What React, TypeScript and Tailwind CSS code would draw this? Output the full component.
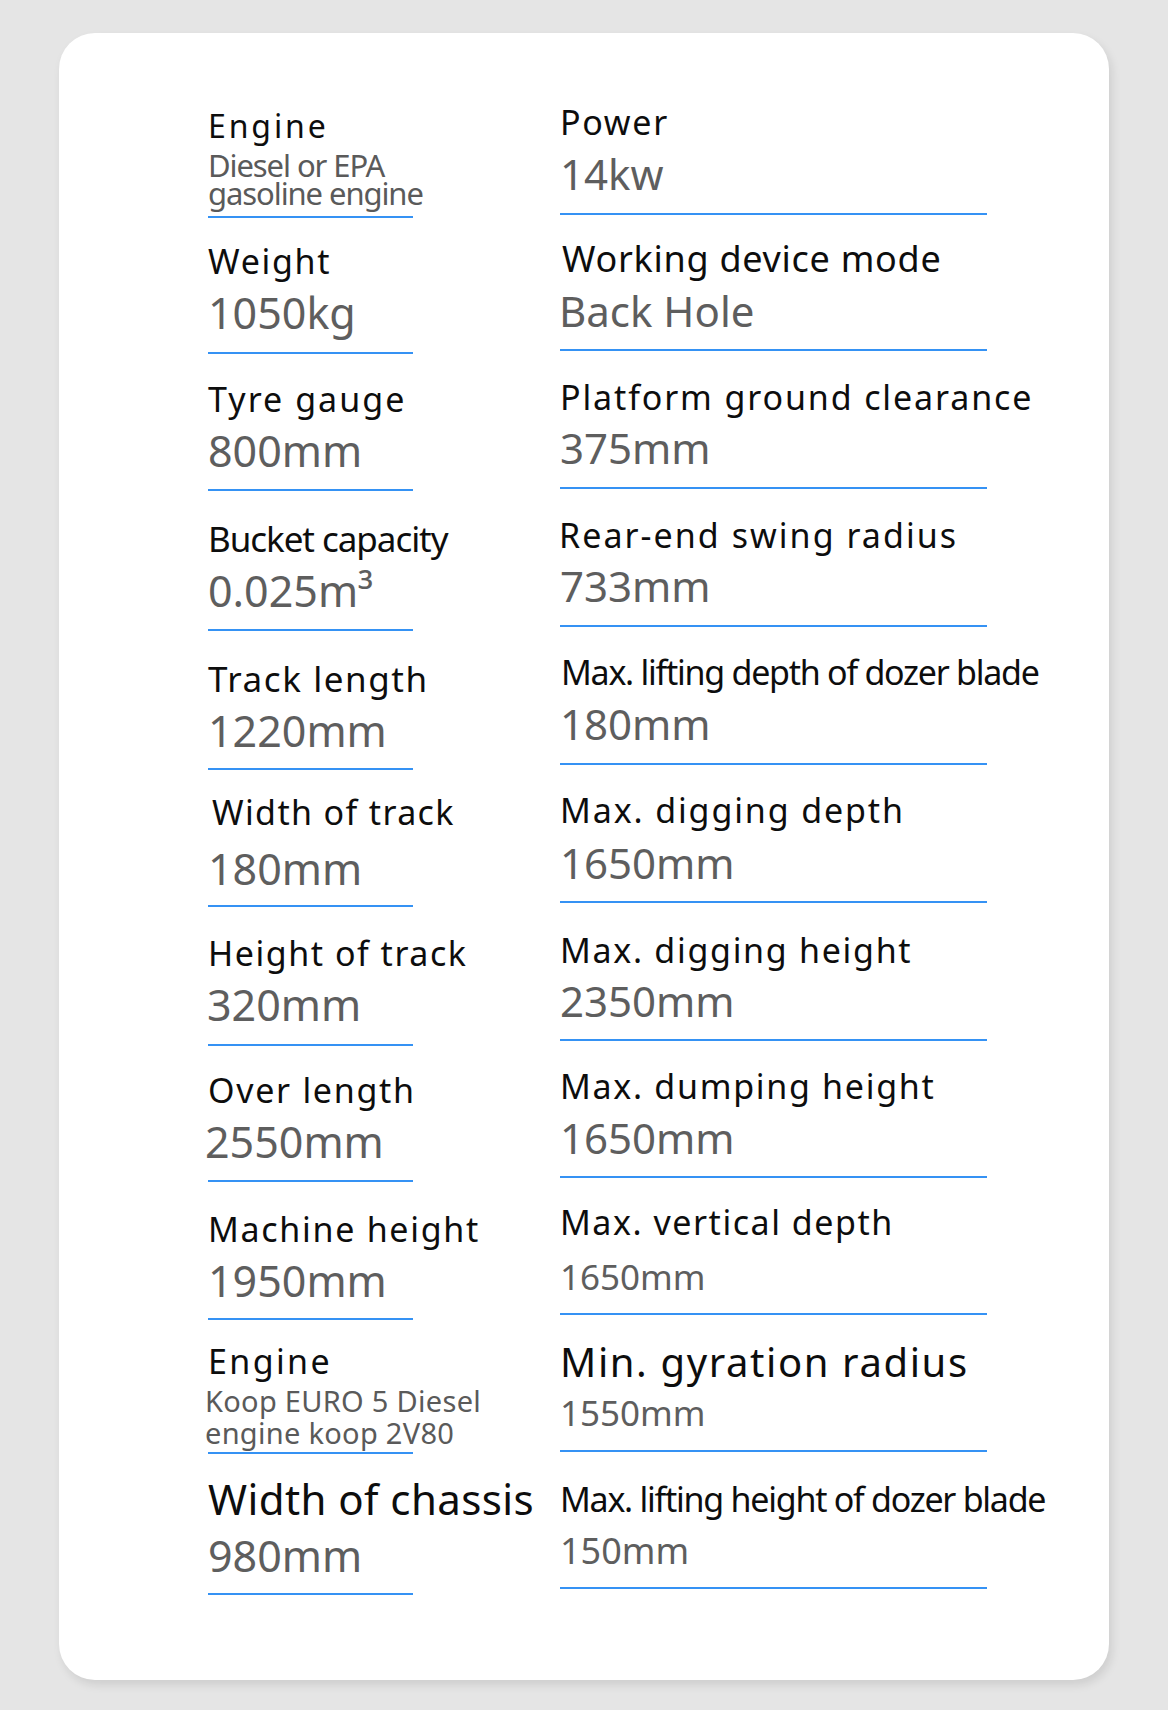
type Spec = {
  h: string
  label: string
  lc: string
  value?: string
  vc?: string
  sub?: string[]
  sc?: string
}

// left column: cell heights run from one blue rule to the next
const left: Spec[] = [
  { h: 'h-[185px]', label: 'Engine', lc: 'mt-[77px] text-[32px] tracking-[0.09em]',
    sub: ['Diesel or EPA', 'gasoline engine'], sc: 'mt-[9px] text-[31px] leading-[28px] tracking-[-0.035em]' },
  { h: 'h-[136px]', label: 'Weight', lc: 'mt-[26px] text-[34px] tracking-[0.05em]', value: '1050kg', vc: 'mt-[13px] text-[43px]' },
  { h: 'h-[137px]', label: 'Tyre gauge', lc: 'mt-[28px] text-[34px] tracking-[0.06em]', value: '800mm', vc: 'mt-[13px] text-[43px]' },
  { h: 'h-[140px]', label: 'Bucket capacity', lc: 'mt-[30px] text-[35px] tracking-[-0.03em]', value: '0.025m³', vc: 'mt-[13px] text-[43px]' },
  { h: 'h-[139px]', label: 'Track length', lc: 'mt-[30px] text-[35px] tracking-[0.045em]', value: '1220mm', vc: 'mt-[13px] text-[43px]' },
  { h: 'h-[137px]', label: 'Width of track', lc: 'mt-[25px] ml-[4px] text-[34px] tracking-[0.04em]', value: '180mm', vc: 'mt-[18px] text-[43px]' },
  { h: 'h-[139px]', label: 'Height of track', lc: 'mt-[29px] text-[34px] tracking-[0.045em]', value: '320mm', vc: 'mt-[13px] -ml-[1px] text-[43px]' },
  { h: 'h-[136px]', label: 'Over length', lc: 'mt-[27px] text-[34px] tracking-[0.05em]', value: '2550mm', vc: 'mt-[13px] -ml-[3px] text-[43px]' },
  { h: 'h-[138px]', label: 'Machine height', lc: 'mt-[30px] text-[34px] tracking-[0.05em]', value: '1950mm', vc: 'mt-[13px] text-[43px]' },
  { h: 'h-[134px]', label: 'Engine', lc: 'mt-[24px] text-[34px] tracking-[0.07em]',
    sub: ['Koop EURO 5 Diesel', 'engine koop 2V80'], sc: 'mt-[7px] -ml-[3px] text-[29px] leading-[32px] tracking-[0.01em]' },
  { h: 'h-[141px]', label: 'Width of chassis', lc: 'mt-[24px] text-[42px] tracking-[0.01em]', value: '980mm', vc: 'mt-[14px] text-[43px]' },
]

const right: Spec[] = [
  { h: 'h-[182px]', label: 'Power', lc: 'mt-[72px] text-[34px] tracking-[0.05em]', value: '14kw', vc: 'mt-[14px] text-[42px]' },
  { h: 'h-[136px]', label: 'Working device mode', lc: 'mt-[26px] ml-[2px] text-[36px] tracking-[0.02em]', value: 'Back Hole', vc: 'mt-[13px] -ml-[1px] text-[42px]' },
  { h: 'h-[138px]', label: 'Platform ground clearance', lc: 'mt-[29px] text-[34px] tracking-[0.055em]', value: '375mm', vc: 'mt-[13px] text-[42px]' },
  { h: 'h-[138px]', label: 'Rear-end swing radius', lc: 'mt-[29px] -ml-[1px] text-[34px] tracking-[0.06em]', value: '733mm', vc: 'mt-[13px] text-[42px]' },
  { h: 'h-[138px]', label: 'Max. lifting depth of dozer blade', lc: 'mt-[28px] ml-[1px] text-[34px] tracking-[-0.037em]', value: '180mm', vc: 'mt-[14px] text-[42px]' },
  { h: 'h-[138px]', label: 'Max. digging depth', lc: 'mt-[28px] text-[34px] tracking-[0.055em]', value: '1650mm', vc: 'mt-[15px] text-[42px]' },
  { h: 'h-[138px]', label: 'Max. digging height', lc: 'mt-[30px] text-[34px] tracking-[0.05em]', value: '2350mm', vc: 'mt-[13px] text-[42px]' },
  { h: 'h-[137px]', label: 'Max. dumping height', lc: 'mt-[28px] text-[34px] tracking-[0.05em]', value: '1650mm', vc: 'mt-[14px] text-[42px]' },
  { h: 'h-[137px]', label: 'Max. vertical depth', lc: 'mt-[27px] text-[34px] tracking-[0.045em]', value: '1650mm', vc: 'mt-[20px] text-[35px]' },
  { h: 'h-[137px]', label: 'Min. gyration radius', lc: 'mt-[27px] text-[40px] tracking-[0.04em]', value: '1550mm', vc: 'mt-[13px] text-[35px]' },
  { h: 'h-[137px]', label: 'Max. lifting height of dozer blade', lc: 'mt-[30px] text-[34px] tracking-[-0.037em]', value: '150mm', vc: 'mt-[17px] text-[36px]' },
]

function SpecCell({ s }: { s: Spec }) {
  return (
    <div className={`${s.h} flex flex-col border-b-2 border-[#3592f4]`}>
      <div className={`whitespace-nowrap leading-none text-[#0d0d0d] ${s.lc}`}>{s.label}</div>
      {s.sub && (
        <div className={`whitespace-nowrap text-[#5a5a5a] ${s.sc}`}>
          {s.sub.map((line) => <div key={line}>{line}</div>)}
        </div>
      )}
      {s.value && (
        <div className={`whitespace-nowrap leading-none text-[#5e5e5e] ${s.vc}`}>{s.value}</div>
      )}
    </div>
  )
}

export default function App() {
  return (
    <div className="h-[1710px] w-[1168px] bg-[#e5e5e5] pl-[59px] pt-[33px] font-['Noto_Sans',sans-serif]">
      <div className="flex h-[1647px] w-[1050px] gap-[147px] rounded-[36px] bg-white pl-[149px] shadow-[3px_5px_10px_rgba(0,0,0,0.10)]">
        <div className="flex w-[205px] flex-col">
          {left.map((s, i) => <SpecCell key={i} s={s} />)}
        </div>
        <div className="flex w-[427px] flex-col">
          {right.map((s, i) => <SpecCell key={i} s={s} />)}
        </div>
      </div>
    </div>
  )
}
